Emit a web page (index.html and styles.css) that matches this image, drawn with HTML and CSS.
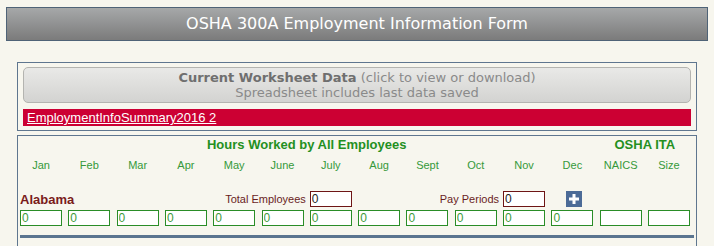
FILE: index.html
```html
<!DOCTYPE html>
<html lang="en">
<head>
  <meta charset="UTF-8" />
  <title>OSHA 300A Employment Information Form</title>
  <link rel="stylesheet" href="styles.css">
</head>
<body>
  <h1 class="title">OSHA 300A Employment Information Form</h1>

  <div class="panel worksheet">
    <button class="sheet-btn">
      <span class="line"><b>Current Worksheet Data</b> (click to view or download)</span>
      <span class="line">Spreadsheet includes last data saved</span>
    </button>
    <div class="file-bar"><a href="#">EmploymentInfoSummary2016 2</a></div>
  </div>

  <div class="panel hours">
    <div class="grid heads">
      <div class="head months-head">Hours Worked by All Employees</div>
      <div class="head ita-head">OSHA ITA</div>
    </div>
    <div class="grid labels">
      <div>Jan</div><div>Feb</div><div>Mar</div><div>Apr</div>
      <div>May</div><div>June</div><div>July</div><div>Aug</div>
      <div>Sept</div><div>Oct</div><div>Nov</div><div>Dec</div>
      <div>NAICS</div><div>Size</div>
    </div>
    <div class="grid state-row">
      <div class="state">Alabama</div>
      <label class="field total">Total Employees <input class="box red" value="0"></label>
      <label class="field pay">Pay Periods <input class="box red" value="0"></label>
      <button class="add" title="Add">
        <svg width="16" height="16" viewBox="0 0 16 16">
          <rect width="16" height="16" fill="#4c6b97"/>
          <path d="M8 3v10M3 8h10" stroke="#fff" stroke-width="3"/>
        </svg>
      </button>
    </div>
    <div class="grid inputs" id="inputs"></div>
    <div class="rule"></div>
  </div>

  <script>
    // 12 months + NAICS + Size
    const row = document.getElementById("inputs");
    for (let i = 0; i < 14; i++) {
      const inp = document.createElement("input");
      inp.className = "box green";
      inp.value = i < 12 ? "0" : "";
      row.appendChild(inp);
    }
  </script>
</body>
</html>
```

FILE: styles.css
```css
body {
  margin: 0;
  padding: 7px 6px;
  background: #f7f6ee;
  font-family: "Liberation Sans", Arial, sans-serif;
}

.title {
  margin: 0;
  height: 31px;
  padding-bottom: 1px;
  line-height: 31px;
  border: 1px solid #4f6377;
  background: linear-gradient(#a6a8a9, #7b7b7b);
  color: #fff;
  text-align: center;
  font-family: "DejaVu Sans", sans-serif;
  font-size: 16px;
  font-weight: normal;
}

.panel {
  margin: 0 11px;
  border: 1px solid #5f768f;
}

.worksheet {
  margin-top: 21px;
  padding: 4px 5px;
}

.sheet-btn {
  display: block;
  width: 100%;
  height: 36px;
  padding: 2px 0;
  border: 1px solid #b4b4b0;
  border-radius: 5px;
  background: linear-gradient(#e9e9e7, #d3d3d1);
  font-family: "DejaVu Sans", sans-serif;
  font-size: 13px;
  line-height: 15px;
  color: #8a8a8a;
  text-align: center;
}

.sheet-btn .line {
  display: block;
}

.sheet-btn b {
  color: #6f6f6f;
}

.file-bar {
  margin-top: 6px;
  height: 17px;
  padding-left: 4px;
  background: #cc0033;
  font-size: 13px;
  line-height: 17px;
}

.file-bar a {
  color: #fff;
}

.hours {
  margin-top: 4px;
  padding: 1px 0 20px 2px;
}

.grid {
  display: grid;
  grid-template-columns: repeat(14, 1fr);
  column-gap: 6.3px;
  width: 670px;
}

.head {
  color: #24901f;
  font-weight: bold;
  font-size: 13px;
  line-height: 15px;
  text-align: center;
}

.months-head {
  grid-column: 1 / 13;
}

.ita-head {
  grid-column: 13 / 15;
}

.labels {
  margin-top: 7px;
  color: #35993a;
  font-size: 11px;
  line-height: 13px;
  text-align: center;
}

.state-row {
  margin-top: 19px;
  height: 16px;
  align-items: center;
}

.state {
  grid-column: 1 / 4;
  color: #7a1b1b;
  font-weight: bold;
  font-size: 13px;
  line-height: 15px;
}

.field {
  display: flex;
  align-items: center;
  gap: 4px;
  justify-self: end;
  color: #6a1d1d;
  font-size: 11px;
}

.total {
  grid-column: 4 / 8;
}

.pay {
  grid-column: 9 / 12;
}

.add {
  grid-column: 12;
  justify-self: center;
  width: 16px;
  height: 16px;
  margin-left: 3px;
  padding: 0;
  border: 0;
  background: none;
}

.add svg {
  display: block;
}

.inputs {
  margin-top: 3px;
}

.box {
  box-sizing: border-box;
  width: 42px;
  height: 16px;
  padding: 0 1px;
  background: #fff;
  font-family: "Liberation Sans", Arial, sans-serif;
  font-size: 12px;
}

.box.green {
  border: 1px solid #2a8d27;
  color: #3d9a3a;
}

.box.red {
  border: 1px solid #6e1515;
  color: #222;
}

.rule {
  margin-top: 9px;
  width: 674px;
  height: 3px;
  background: #5b7590;
}
```
